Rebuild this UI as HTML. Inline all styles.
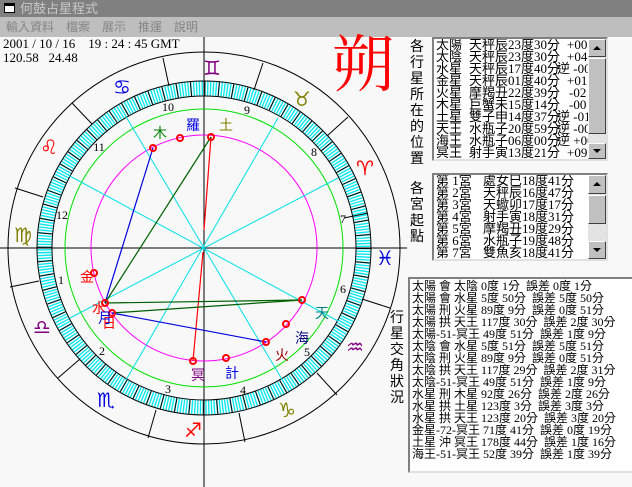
<!DOCTYPE html>
<html><head><meta charset="utf-8"><style>
*{margin:0;padding:0;box-sizing:border-box}
body{width:632px;height:487px;overflow:hidden;background:#f8f8f8;position:relative;font-family:"Liberation Serif","Noto Sans CJK TC",serif;}
#title{position:absolute;left:0;top:0;width:632px;height:17px;background:#808080;color:#c8c8c8;font:13px/17px "Liberation Sans","Noto Sans CJK TC",sans-serif;padding-left:20px}
#icon{position:absolute;left:4px;top:3px;width:11px;height:10px;background:#fff;border:1px solid #000;border-top:3px solid #000}
#menu{position:absolute;left:0;top:17px;width:632px;height:20px;background:#bebebe;color:#858585;font:12px/20px "Liberation Sans","Noto Sans CJK TC",sans-serif}
#menu span{position:absolute;top:0}
.p{position:absolute;background:#fff;border-top:2px solid #808080;border-left:2px solid #808080;border-right:2px solid #e0e0e0;border-bottom:2px solid #e0e0e0;overflow:hidden}
.l{position:absolute;left:2px;font-size:13px;line-height:12px;color:#000;font-family:"Liberation Serif","Noto Sans CJK TC",serif}
.l div{position:relative;height:12px;width:200px}
.l span{position:absolute;top:0;white-space:nowrap}
.sb{position:absolute;background:#c0c0c0;border:1px solid;border-color:#fff #404040 #404040 #fff}
.tr{position:absolute;background:repeating-linear-gradient(45deg,#d8d8d8 0 1px,#f0f0f0 1px 2px)}
.vt{position:absolute;font:14px/16px "Noto Sans CJK TC",sans-serif;width:16px;text-align:center;color:#000}
.ar{position:absolute;left:4px;width:0;height:0;border-left:4px solid transparent;border-right:4px solid transparent}
</style></head><body>
<div id="title"><div id="icon"></div>何鼓占星程式</div>
<div id="menu"><span style="left:6px">輸入資料</span><span style="left:66px">檔案</span><span style="left:102px">展示</span><span style="left:138px">推運</span><span style="left:174px">說明</span></div>
<div style="position:absolute;left:3px;top:37px;font:13px/14px 'Liberation Serif',serif;white-space:pre">2001 / 10 / 16    19 : 24 : 45 GMT
120.58   24.48</div>

<svg style="position:absolute;left:0;top:0" width="632" height="487" font-family="'Noto Sans CJK TC',sans-serif">
<line x1="204" y1="37" x2="204" y2="487" stroke="#000"/>
<line x1="0" y1="248" x2="407" y2="248" stroke="#000"/>
<circle cx="204" cy="248" r="196" fill="none" stroke="#000"/>
<circle cx="204" cy="248" r="159.5" fill="none" stroke="#00e8f0" stroke-width="14" stroke-dasharray="1.3 1.484"/>
<circle cx="204" cy="248" r="159.5" fill="none" stroke="#000" stroke-width="14" stroke-dasharray="1 12.92"/>
<circle cx="204" cy="248" r="167" fill="none" stroke="#000"/>
<circle cx="204" cy="248" r="152" fill="none" stroke="#000"/>
<circle cx="204" cy="248" r="139" fill="none" stroke="#00e000"/>
<circle cx="204" cy="248" r="113" fill="none" stroke="#ff00ff"/>
<g stroke="#000">
<line x1="169" y1="86" x2="163" y2="58"/><line x1="254" y1="90" x2="263" y2="63"/>
<line x1="327" y1="136" x2="348" y2="117"/><line x1="344" y1="218" x2="368" y2="213"/>
<line x1="362" y1="299" x2="390" y2="308"/><line x1="317" y1="373" x2="337" y2="395"/>
<line x1="239" y1="413" x2="245" y2="442"/><line x1="156" y1="410" x2="148" y2="438"/>
<line x1="80" y1="359" x2="58" y2="378"/><line x1="39" y1="281" x2="10" y2="287"/>
<line x1="43" y1="197" x2="15" y2="188"/><line x1="92" y1="124" x2="72" y2="103"/>
</g>
<g stroke="#00e0e8">
<line x1="125" y1="115" x2="283" y2="381"/>
<line x1="278" y1="118" x2="126" y2="380"/>
<line x1="338" y1="178" x2="70" y2="318"/>
<line x1="68" y1="175" x2="338" y2="321"/>
</g>
<g stroke-width="1.2">
<line x1="211" y1="137" x2="204" y2="230" stroke="#f00"/>
<line x1="203" y1="252" x2="193" y2="361" stroke="#f00"/>
<line x1="153" y1="148" x2="105" y2="303" stroke="#0000e0"/>
<line x1="211" y1="137" x2="105" y2="303" stroke="#006000"/>
<line x1="105" y1="303" x2="302" y2="300" stroke="#006000"/>
<line x1="112" y1="313" x2="302" y2="300" stroke="#006000"/>
<line x1="112" y1="313" x2="266" y2="342" stroke="#0000e0"/>
</g>
<g fill="none" stroke="#f00" stroke-width="2">
<circle cx="211" cy="137" r="3"/><circle cx="180" cy="138" r="3"/><circle cx="153" cy="148" r="3"/>
<circle cx="94" cy="273" r="3"/><circle cx="105" cy="303" r="3"/><circle cx="112" cy="313" r="3"/>
<circle cx="193" cy="361" r="3"/><circle cx="226" cy="358" r="3"/><circle cx="266" cy="342" r="3"/>
<circle cx="286" cy="324" r="3"/><circle cx="302" cy="300" r="3"/>
</g>
<g font-size="14" text-anchor="middle" dominant-baseline="central">
<text x="160" y="133" fill="#008000">木</text>
<text x="193" y="125" fill="#0000e0">羅</text>
<text x="226" y="125" fill="#808000">土</text>
<text x="87" y="277" fill="#f00">金</text>
<text x="99" y="308" fill="#f00">水</text>
<text x="109" y="323" fill="#f00">日</text>
<text x="105" y="318" fill="#0000e0">月</text>
<text x="198" y="375" fill="#800080">冥</text>
<text x="232" y="373" fill="#0000e0">計</text>
<text x="282" y="355" fill="#a00000">火</text>
<text x="302" y="338" fill="#000080">海</text>
<text x="322" y="313" fill="#008080">天</text>
</g>
<g font-size="12" font-family="'Liberation Serif',serif" text-anchor="middle" dominant-baseline="central">
<text x="168" y="107">10</text><text x="247" y="110">9</text><text x="314" y="152">8</text>
<text x="99" y="147">11</text><text x="62" y="215">12</text><text x="343" y="219">7</text>
<text x="61" y="280">1</text><text x="343" y="289">6</text><text x="102" y="351">2</text>
<text x="307" y="352">5</text><text x="168" y="389">3</text><text x="243" y="390">4</text>
</g>
<g font-size="20" font-weight="bold" font-family="'DejaVu Sans',sans-serif" text-anchor="middle" dominant-baseline="central">
<text x="212" y="68" fill="#800080">♊&#xFE0E;</text>
<text x="122" y="87" fill="#0000e0">♋&#xFE0E;</text>
<text x="302" y="99" fill="#808000">♉&#xFE0E;</text>
<text x="49" y="147" fill="#f00">♌&#xFE0E;</text>
<text x="365" y="168" fill="#f00">♈&#xFE0E;</text>
<text x="23" y="235" fill="#808000">♍&#xFE0E;</text>
<text x="385" y="258" fill="#0000e0">♓&#xFE0E;</text>
<text x="42" y="327" fill="#800080">♎&#xFE0E;</text>
<text x="355" y="347" fill="#800080">♒&#xFE0E;</text>
<text x="106" y="400" fill="#0000e0">♏&#xFE0E;</text>
<text x="287" y="410" fill="#808000">♑&#xFE0E;</text>
<text x="193" y="430" fill="#f00">♐&#xFE0E;</text>
</g>
<text x="363" y="86" font-size="62" fill="#f00" text-anchor="middle" font-family="'Noto Serif CJK SC',serif">朔</text>
</svg>

<div class="vt" style="left:409px;top:38px">各<br>行<br>星<br>所<br>在<br>的<br>位<br>置</div>
<div class="vt" style="left:409px;top:180px">各<br>宮<br>起<br>點</div>
<div class="vt" style="left:389px;top:309px">行<br>星<br>交<br>角<br>狀<br>況</div>

<div class="p" style="left:432px;top:37px;width:176px;height:124px">
<div class="l" style="top:0">
<div><span style="left:0">太陽</span><span style="left:33px">天秤辰23度30分</span><span style="left:131px">+00 01</span></div>
<div><span style="left:0">太陰</span><span style="left:33px">天秤辰23度30分</span><span style="left:131px">+04 30</span></div>
<div><span style="left:0">水星</span><span style="left:33px">天秤辰17度40分</span><span style="left:121px">逆 -00</span></div>
<div><span style="left:0">金星</span><span style="left:33px">天秤辰01度40分</span><span style="left:131px">+01 30</span></div>
<div><span style="left:0">火星</span><span style="left:33px">摩羯丑22度39分</span><span style="left:133px">-02 20</span></div>
<div><span style="left:0">木星</span><span style="left:33px">巨蟹未15度14分</span><span style="left:133px">-00 00</span></div>
<div><span style="left:0">土星</span><span style="left:33px">雙子申14度37分</span><span style="left:121px">逆 -01</span></div>
<div><span style="left:0">天王</span><span style="left:33px">水瓶子20度59分</span><span style="left:121px">逆 -00</span></div>
<div><span style="left:0">海王</span><span style="left:33px">水瓶子06度00分</span><span style="left:121px">逆 +00</span></div>
<div><span style="left:0">冥王</span><span style="left:33px">射手寅13度21分</span><span style="left:131px">+09 50</span></div>
</div>
<div class="tr" style="left:154px;top:0;width:18px;height:120px"></div>
<div class="sb" style="left:154px;top:0;width:18px;height:18px"><div class="ar" style="top:6px;border-bottom:4px solid #000"></div></div>
<div class="sb" style="left:154px;top:19px;width:18px;height:76px"></div>
<div class="sb" style="left:154px;top:104px;width:18px;height:16px"><div class="ar" style="top:5px;border-top:4px solid #000"></div></div>
</div>

<div class="p" style="left:432px;top:173px;width:176px;height:88px">
<div class="l" style="top:0">
<div><span style="left:0">第 1宮</span><span style="left:47px">處女巳18度41分</span></div>
<div><span style="left:0">第 2宮</span><span style="left:47px">天秤辰16度47分</span></div>
<div><span style="left:0">第 3宮</span><span style="left:47px">天蠍卯17度17分</span></div>
<div><span style="left:0">第 4宮</span><span style="left:47px">射手寅18度31分</span></div>
<div><span style="left:0">第 5宮</span><span style="left:47px">摩羯丑19度29分</span></div>
<div><span style="left:0">第 6宮</span><span style="left:47px">水瓶子19度48分</span></div>
<div><span style="left:0">第 7宮</span><span style="left:47px">雙魚亥18度41分</span></div>
</div>
<div class="tr" style="left:154px;top:0;width:18px;height:84px"></div>
<div class="sb" style="left:154px;top:0;width:18px;height:19px"><div class="ar" style="top:6px;border-bottom:4px solid #000"></div></div>
<div class="sb" style="left:154px;top:20px;width:18px;height:29px"></div>
<div class="sb" style="left:154px;top:66px;width:18px;height:18px"><div class="ar" style="top:6px;border-top:4px solid #000"></div></div>
</div>

<div class="p" style="left:408px;top:277px;width:226px;height:196px">
<div style="position:absolute;top:1px;left:2px;line-height:12px;font-size:12px;white-space:pre;font-family:'Liberation Serif','Noto Sans CJK TC',serif">太陽 會 太陰 0度 1分  誤差 0度 1分
太陽 會 水星 5度 50分  誤差 5度 50分
太陽 刑 火星 89度 9分  誤差 0度 51分
太陽 拱 天王 117度 30分  誤差 2度 30分
太陽-51-冥王 49度 51分  誤差 1度 9分
太陰 會 水星 5度 51分  誤差 5度 51分
太陰 刑 火星 89度 9分  誤差 0度 51分
太陰 拱 天王 117度 29分  誤差 2度 31分
太陰-51-冥王 49度 51分  誤差 1度 9分
水星 刑 木星 92度 26分  誤差 2度 26分
水星 拱 土星 123度 3分  誤差 3度 3分
水星 拱 天王 123度 20分  誤差 3度 20分
金星-72-冥王 71度 41分  誤差 0度 19分
土星 沖 冥王 178度 44分  誤差 1度 16分
海王-51-冥王 52度 39分  誤差 1度 39分</div>
</div>
</body></html>
